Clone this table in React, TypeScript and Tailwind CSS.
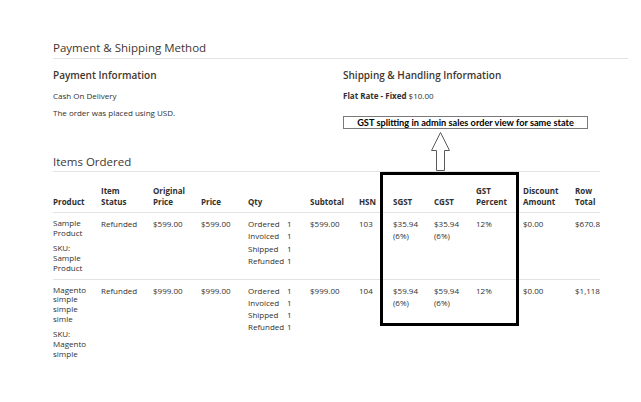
import React from 'react';

const cols = 'grid grid-cols-[48px_52px_48px_47px_62px_49px_34px_41px_42px_47px_52px_25px]';

// header labels, split the way the admin grid wraps them
const headers: string[][] = [
  ['Product'],
  ['Item', 'Status'],
  ['Original', 'Price'],
  ['Price'],
  ['Qty'],
  ['Subtotal'],
  ['HSN'],
  ['SGST'],
  ['CGST'],
  ['GST', 'Percent'],
  ['Discount', 'Amount'],
  ['Row', 'Total'],
];

interface Item {
  name: string[];
  sku: string[];
  price: string;
  hsn: string;
  gst: string;
  total: string;
}

const items: Item[] = [
  {
    name: ['Sample', 'Product'],
    sku: ['SKU:', 'Sample', 'Product'],
    price: '$599.00',
    hsn: '103',
    gst: '$35.94',
    total: '$670.88',
  },
  {
    name: ['Magento', 'simple', 'simple', 'simle'],
    sku: ['SKU:', 'Magento', 'simple'],
    price: '$999.00',
    hsn: '104',
    gst: '$59.94',
    total: '$1,118.88',
  },
];

const qtyRows = ['Ordered', 'Invoiced', 'Shipped', 'Refunded'];

const ItemRow: React.FC<{ item: Item; last?: boolean }> = ({ item, last }) => (
  <div className={`${cols} pt-[5px] pb-[6px] leading-[12px] ${last ? '' : 'border-b border-[#e3e3e3]'}`}>
    <div className="leading-[9.7px] pr-1">
      {item.name.map((l, i) => (
        <div key={i}>{l}</div>
      ))}
      <div className="mt-[6px]">
        {item.sku.map((l, i) => (
          <div key={i}>{l}</div>
        ))}
      </div>
    </div>
    <div>Refunded</div>
    <div>{item.price}</div>
    <div>{item.price}</div>
    <div className="leading-[12.3px]">
      {qtyRows.map((q) => (
        <div key={q} className="flex">
          <span className="w-[39px]">{q}</span>
          <span>1</span>
        </div>
      ))}
    </div>
    <div>{item.price}</div>
    <div>{item.hsn}</div>
    <div>
      <div>{item.gst}</div>
      <div>(6%)</div>
    </div>
    <div>
      <div>{item.gst}</div>
      <div>(6%)</div>
    </div>
    <div>12%</div>
    <div>$0.00</div>
    <div className="overflow-hidden whitespace-nowrap">{item.total}</div>
  </div>
);

export default function App() {
  return (
    <div className="relative w-[641px] h-[402px] overflow-hidden bg-white font-['Open_Sans',sans-serif] text-[#303030]">
      <div className="pl-[53px] pr-[13px] pt-[40px]">
        <div className="text-[11.5px] leading-[16px] pb-[2px] text-[#41362f] border-b border-[#e3e3e3]">
          Payment &amp; Shipping Method
        </div>
        <div className="grid grid-cols-[290px_1fr]">
          <div>
            <div className="mt-[9px] text-[10px] leading-[14px] font-semibold text-[#41362f]">Payment Information</div>
            <div className="mt-[8px] text-[8px] leading-[11px]">Cash On Delivery</div>
            <div className="mt-[6px] text-[8px] leading-[11px]">The order was placed using USD.</div>
          </div>
          <div>
            <div className="mt-[9px] text-[10px] leading-[14px] font-semibold text-[#41362f]">
              Shipping &amp; Handling Information
            </div>
            <div className="mt-[8px] text-[8px] leading-[11px]">
              <span className="font-bold">Flat Rate - Fixed</span> $10.00
            </div>
            <div className="mt-[15px] w-[245px] h-[13px] border border-[#7a7a7a] flex items-center justify-center font-['Lato',sans-serif] font-bold text-[9.2px] leading-[11px] text-black">
              GST splitting in admin sales order view for same state
            </div>
          </div>
        </div>
      </div>

      <div className="pl-[53px] w-[600px] overflow-hidden mt-[25px]">
        <div className="text-[11.5px] leading-[16px] pb-[1px] text-[#41362f] border-b border-[#e3e3e3]">
          Items Ordered
        </div>
        <div className="text-[8px]">
          <div className={`${cols} items-end pt-[13px] pb-[5px] leading-[11px] font-bold border-b border-[#e3e3e3]`}>
            {headers.map((h) => (
              <div key={h.join(' ')} className="whitespace-nowrap">
                {h.map((l) => (
                  <div key={l}>{l}</div>
                ))}
              </div>
            ))}
          </div>
          {items.map((it, i) => (
            <ItemRow key={i} item={it} last={i === items.length - 1} />
          ))}
        </div>
      </div>

      {/* annotation overlay */}
      <svg className="absolute left-0 top-0" width="641" height="402" viewBox="0 0 641 402">
        <polygon
          points="440.5,132.5 431.5,150.5 436.5,150.5 436.5,170.5 444.5,170.5 444.5,150.5 449.5,150.5"
          fill="#fff"
          stroke="#5a5a5a"
          strokeWidth="1"
        />
      </svg>
      <div className="absolute left-[380px] top-[172px] w-[139px] h-[154px] border-[3px] border-black" />
    </div>
  );
}
